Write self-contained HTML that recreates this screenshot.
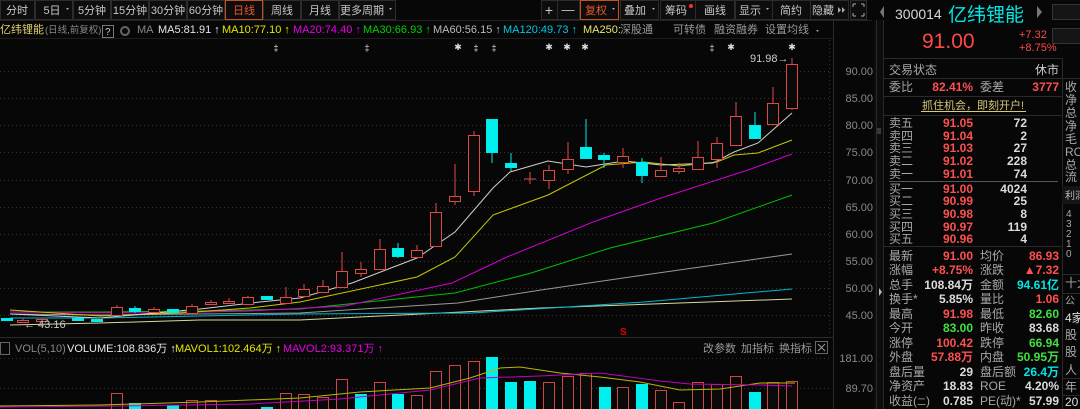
<!DOCTYPE html>
<html><head><meta charset="utf-8"><style>
html,body{margin:0;padding:0;background:#070707;width:1080px;height:409px;overflow:hidden}
svg{display:block}
text{font-family:"Liberation Sans","Noto Sans CJK SC",sans-serif}
</style></head><body>
<svg width="1080" height="409" viewBox="0 0 1080 409" xmlns="http://www.w3.org/2000/svg" style="overflow:hidden">
<rect width="1080" height="409" fill="#070707"/>
<g fill="#0d0d0d" stroke="#2c2c2c">
<rect x="0.5" y="0.5" width="34" height="19"/><rect x="35.5" y="0.5" width="37" height="19"/><rect x="73.5" y="0.5" width="37" height="19"/><rect x="111.5" y="0.5" width="37" height="19"/><rect x="149.5" y="0.5" width="37" height="19"/><rect x="187.5" y="0.5" width="37" height="19"/><rect x="263.5" y="0.5" width="37" height="19"/><rect x="301.5" y="0.5" width="37" height="19"/><rect x="339.5" y="0.5" width="56" height="19"/>
<rect x="541.5" y="0.5" width="16" height="19"/><rect x="557.5" y="0.5" width="22" height="19"/><rect x="620.5" y="0.5" width="38" height="19"/><rect x="660.5" y="0.5" width="35" height="19"/><rect x="695.5" y="0.5" width="39" height="19"/><rect x="735.5" y="0.5" width="37" height="19"/><rect x="772.5" y="0.5" width="38" height="19"/><rect x="810.5" y="0.5" width="38" height="19"/><rect x="850.5" y="0.5" width="16" height="19"/>
</g>
<rect x="225.5" y="0.5" width="37" height="19" fill="#0d0d0d" stroke="#c8501e"/>
<rect x="580.5" y="0.5" width="38" height="19" fill="#0d0d0d" stroke="#c8501e"/>
<g font-size="11" fill="#c8c8c8" text-anchor="middle">
<text x="17" y="14">分时</text><text x="52" y="14">5日</text><text x="92" y="14">5分钟</text><text x="130" y="14">15分钟</text><text x="168" y="14">30分钟</text><text x="206" y="14">60分钟</text>
<text x="244" y="14" fill="#e8582a">日线</text><text x="282" y="14">周线</text><text x="320" y="14">月线</text><text x="362" y="14">更多周期</text>
<text x="549" y="15" font-size="14">+</text><text x="568" y="14" font-size="13">—</text>
<text x="596" y="14" fill="#e8582a">复权</text><text x="635" y="14">叠加</text><text x="676" y="14">筹码</text><text x="715" y="14">画线</text><text x="750" y="14">显示</text><text x="791" y="14">简约</text><text x="823" y="14">隐藏</text>
</g>
<g fill="#aaa"><path d="M66 8l3 0-1.5 2z"/><path d="M389 8l3 0-1.5 2z"/><path d="M612 8l3 0-1.5 2z"/><path d="M652 8l3 0-1.5 2z"/><path d="M766 8l3 0-1.5 2z"/><path d="M838 7l3 3-3 3z"/><path d="M842 7l3 3-3 3z"/></g>
<circle cx="691" cy="6" r="2" fill="#ff3030"/>
<g stroke="#aaa" fill="none" stroke-width="1"><path d="M853 4h3M853 4v3M864 4h-3M864 4v3M853 16h3M853 16v-3M864 16h-3M864 16v-3"/></g>
<line x1="0" y1="20.5" x2="872" y2="20.5" stroke="#222"/>
<g font-size="11">
<text x="0" y="33" fill="#e0d070">亿纬锂能</text><text x="45" y="33" fill="#888" font-size="9.5">(日线,前复权)</text>
<rect x="102.5" y="25.5" width="11" height="12" fill="none" stroke="#777"/><text x="105" y="35" fill="#ccc" font-size="10">?</text>
<circle cx="125" cy="31" r="4" fill="none" stroke="#666" stroke-width="2"/>
<text x="137" y="33" fill="#888">MA</text>
<text x="158" y="33" fill="#e6e6e6">MA5:81.91 ↑</text>
<text x="222" y="33" fill="#e6e600">MA10:77.10 ↑</text>
<text x="293" y="33" fill="#e600e6">MA20:74.40 ↑</text>
<text x="363" y="33" fill="#00d000">MA30:66.93 ↑</text>
<text x="433" y="33" fill="#bbb">MA60:56.15 ↑</text>
<text x="503" y="33" fill="#00c8e6">MA120:49.73 ↑</text>
<text x="583" y="33" fill="#e6e66e">MA250:</text><text x="620" y="33" fill="#999">深股通</text>
<text x="673" y="33" fill="#999">可转债</text><text x="714" y="33" fill="#999">融资融券</text><text x="765" y="33" fill="#999">设置均线</text>
</g>
<path d="M816 30l3 0-1.5 2z" fill="#999"/>
<line x1="0" y1="38.5" x2="833" y2="38.5" stroke="#1c1c1c"/>
<g font-size="9" fill="#ddd" text-anchor="middle">
<text x="276" y="51">‡</text><text x="367" y="51">‡</text><text x="458" y="50">✱</text><text x="476" y="51">‡</text><text x="494" y="51">‡</text><text x="549" y="50">✱</text><text x="567" y="50">✱</text><text x="585" y="50">✱</text><text x="712" y="51">‡</text><text x="731" y="50">✱</text><text x="792" y="50">✱</text>
</g>
<g stroke="#333" stroke-dasharray="1 3">
<line x1="0" y1="71.5" x2="832" y2="71.5"/><line x1="0" y1="98.5" x2="832" y2="98.5"/><line x1="0" y1="125.5" x2="832" y2="125.5"/><line x1="0" y1="152.5" x2="832" y2="152.5"/><line x1="0" y1="180.5" x2="832" y2="180.5"/><line x1="0" y1="207.5" x2="832" y2="207.5"/><line x1="0" y1="234.5" x2="832" y2="234.5"/><line x1="0" y1="261.5" x2="832" y2="261.5"/><line x1="0" y1="288.5" x2="832" y2="288.5"/><line x1="0" y1="315.5" x2="832" y2="315.5"/>
<line x1="0" y1="358.5" x2="832" y2="358.5"/><line x1="0" y1="388.5" x2="832" y2="388.5"/>
<line x1="829.5" y1="40" x2="829.5" y2="336"/>
</g>
<g font-size="11" fill="#8a8a8a" text-anchor="end">
<text x="873" y="75">90.00</text><text x="873" y="102">85.00</text><text x="873" y="129">80.00</text><text x="873" y="156">75.00</text><text x="873" y="184">70.00</text><text x="873" y="211">65.00</text><text x="873" y="238">60.00</text><text x="873" y="265">55.00</text><text x="873" y="292">50.00</text><text x="873" y="319">45.00</text>
<text x="873" y="362">181.00</text><text x="873" y="392">89.70</text>
</g>
<line x1="833.5" y1="20" x2="833.5" y2="409" stroke="#2a2a2a"/>
<g fill="none" stroke-width="1">
<polyline stroke="#d8d8a0" points="10,325 100,323 200,320 300,320 541,308 792,299"/>
<polyline stroke="#00b8d0" points="10,318 100,318 200,316 300,314 472,313 644,302 792,289"/>
<polyline stroke="#9a9a9a" points="10,314 100,315 200,314 300,313 458,303 541,290 644,275 792,254"/>
<polyline stroke="#00c000" points="10,312 100,312 200,311 300,309 455,293 531,273 610,248 713,223 792,195"/>
<polyline stroke="#d000d0" points="10,312 150,313 250,311 345,306 452,283 507,257 593,222 661,198 748,170 792,154"/>
<polyline stroke="#c8c800" points="10,310 100,316 180,313 250,308 300,302 417,277 455,257 493,215 548,195 606,165 644,162 679,166 717,162 734,155 758,153 792,140"/>
<polyline stroke="#cfcfcf" points="10,314 100,318 200,309 260,302 300,298 352,283 417,258 455,232 493,188 510,172 548,161 586,167 624,161 661,165 713,163 734,152 758,143 792,113"/>
</g>
<g stroke="#e04848" fill="#0a0a0a" stroke-width="1">
<line x1="23" y1="318" x2="23" y2="323"/><rect x="17.5" y="320.5" width="11" height="2"/>
<line x1="42" y1="318" x2="42" y2="322"/><rect x="36.5" y="319.5" width="11" height="2"/>
<line x1="117" y1="305" x2="117" y2="316"/><rect x="111.5" y="307.5" width="11" height="8"/>
<line x1="154" y1="307" x2="154" y2="312"/><rect x="148.5" y="309.5" width="11" height="3"/>
<line x1="192" y1="304" x2="192" y2="313"/><rect x="186.5" y="306.5" width="11" height="7"/>
<line x1="211" y1="300" x2="211" y2="304"/><rect x="205.5" y="302.5" width="11" height="2"/>
<line x1="229" y1="298" x2="229" y2="303"/><rect x="223.5" y="301.5" width="11" height="2"/>
<line x1="248" y1="296" x2="248" y2="304"/><rect x="242.5" y="297.5" width="11" height="7"/>
<line x1="286" y1="287" x2="286" y2="303"/><rect x="280.5" y="297.5" width="11" height="6"/>
<line x1="304" y1="284" x2="304" y2="296"/><rect x="298.5" y="289.5" width="11" height="7"/>
<line x1="323" y1="280" x2="323" y2="292"/><rect x="317.5" y="286.5" width="11" height="6"/>
<line x1="342" y1="252" x2="342" y2="287"/><rect x="336.5" y="271.5" width="11" height="16"/>
<line x1="361" y1="262" x2="361" y2="277"/><rect x="355.5" y="269.5" width="11" height="4"/>
<line x1="380" y1="239" x2="380" y2="269"/><rect x="374.5" y="249.5" width="11" height="20"/>
<line x1="417" y1="245" x2="417" y2="257"/><rect x="411.5" y="250.5" width="11" height="7"/>
<line x1="436" y1="203" x2="436" y2="246"/><rect x="430.5" y="212.5" width="11" height="34"/>
<line x1="455" y1="164" x2="455" y2="205"/><rect x="449.5" y="196.5" width="11" height="5"/>
<line x1="474" y1="131" x2="474" y2="196"/><rect x="468.5" y="135.5" width="11" height="56"/>
<line x1="530" y1="172" x2="530" y2="184"/><line x1="524" y1="179" x2="536" y2="179"/>
<line x1="549" y1="165" x2="549" y2="189"/><rect x="543.5" y="170.5" width="11" height="10"/>
<line x1="568" y1="142" x2="568" y2="174"/><rect x="562.5" y="159.5" width="11" height="10"/>
<line x1="623" y1="148" x2="623" y2="168"/><rect x="617.5" y="156.5" width="11" height="6"/>
<line x1="661" y1="157" x2="661" y2="176"/><rect x="655.5" y="170.5" width="11" height="6"/>
<line x1="679" y1="163" x2="679" y2="174"/><rect x="673.5" y="168.5" width="11" height="3"/>
<line x1="698" y1="141" x2="698" y2="169"/><rect x="692.5" y="157.5" width="11" height="12"/>
<line x1="717" y1="137" x2="717" y2="168"/><rect x="711.5" y="143.5" width="11" height="16"/>
<line x1="736" y1="102" x2="736" y2="145"/><rect x="730.5" y="116.5" width="11" height="29"/>
<line x1="773" y1="87" x2="773" y2="124"/><rect x="767.5" y="103.5" width="11" height="21"/>
<line x1="792" y1="58" x2="792" y2="110"/><rect x="786.5" y="64.5" width="11" height="44"/>
</g>
<g stroke="#00e8e8" fill="#00f0f0">
<rect x="1.5" y="318.5" width="11" height="2"/><rect x="72.5" y="318.5" width="11" height="2"/><rect x="91.5" y="319.5" width="11" height="2"/>
<line x1="135" y1="306" x2="135" y2="313"/><rect x="129.5" y="308.5" width="11" height="3"/>
<rect x="167.5" y="309.5" width="11" height="3"/>
<rect x="261.5" y="296.5" width="11" height="3"/>
<line x1="398" y1="243" x2="398" y2="258"/><rect x="392.5" y="248.5" width="11" height="8"/>
<line x1="492" y1="119" x2="492" y2="163"/><rect x="486.5" y="119.5" width="11" height="33"/>
<line x1="511" y1="153" x2="511" y2="171"/><rect x="505.5" y="163.5" width="11" height="4"/>
<line x1="586" y1="119" x2="586" y2="159"/><rect x="580.5" y="147.5" width="11" height="11"/>
<line x1="604" y1="153" x2="604" y2="168"/><rect x="598.5" y="155.5" width="11" height="4"/>
<line x1="642" y1="158" x2="642" y2="183"/><rect x="636.5" y="162.5" width="11" height="13"/>
<line x1="755" y1="112" x2="755" y2="138"/><rect x="749.5" y="125.5" width="11" height="13"/>
</g>
<text x="750" y="62" font-size="11" fill="#ccc">91.98→</text>
<text x="24" y="328" font-size="11" fill="#ccc">← 43.16</text>
<text x="620" y="335" font-size="10" fill="#e00000" font-weight="bold">S</text>
<line x1="0" y1="337.5" x2="833" y2="337.5" stroke="#2a2a2a"/>
<g font-size="11">
<rect x="0.5" y="342.5" width="9" height="12" fill="none" stroke="#666"/>
<text x="15" y="352" fill="#888">VOL(5,10)</text>
<text x="67" y="352" fill="#e6e6e6">VOLUME:108.836万 ↑</text>
<text x="175" y="352" fill="#e6e600">MAVOL1:102.464万 ↑</text>
<text x="283" y="352" fill="#e600e6">MAVOL2:93.371万 ↑</text>
<text x="703" y="352" fill="#999">改参数</text><text x="741" y="352" fill="#999">加指标</text><text x="779" y="352" fill="#999">换指标</text>
</g>
<rect x="815.5" y="341.5" width="12" height="12" fill="none" stroke="#666"/>
<path d="M818 344l7 7M825 344l-7 7" stroke="#999"/>
<g stroke="#d04444" fill="#0a0a0a">
<rect x="111.5" y="393.5" width="11" height="16"/><rect x="186.5" y="400.5" width="11" height="9"/><rect x="205.5" y="400.5" width="11" height="9"/><rect x="280.5" y="393.5" width="11" height="16"/><rect x="298.5" y="394.5" width="11" height="15"/><rect x="317.5" y="397.5" width="11" height="12"/><rect x="336.5" y="379.5" width="11" height="30"/><rect x="374.5" y="382.5" width="11" height="27"/><rect x="411.5" y="395.5" width="11" height="14"/>
<rect x="430.5" y="371.5" width="11" height="38"/><rect x="449.5" y="365.5" width="11" height="44"/><rect x="468.5" y="361.5" width="11" height="48"/><rect x="543.5" y="382.5" width="11" height="27"/><rect x="562.5" y="376.5" width="11" height="33"/><rect x="580.5" y="373.5" width="11" height="36"/><rect x="617.5" y="387.5" width="11" height="22"/><rect x="655.5" y="390.5" width="11" height="19"/><rect x="673.5" y="402.5" width="11" height="7"/><rect x="692.5" y="382.5" width="11" height="27"/><rect x="711.5" y="384.5" width="11" height="25"/><rect x="730.5" y="376.5" width="11" height="33"/><rect x="767.5" y="382.5" width="11" height="27"/><rect x="786.5" y="381.5" width="11" height="28"/>
</g>
<g fill="#00f0f0">
<rect x="129" y="403" width="12" height="6"/><rect x="167" y="405" width="12" height="4"/><rect x="261" y="407" width="12" height="2"/><rect x="355" y="394" width="12" height="15"/><rect x="392" y="394" width="12" height="15"/>
<rect x="486" y="357" width="12" height="52"/><rect x="505" y="382" width="12" height="27"/><rect x="524" y="381" width="12" height="28"/><rect x="599" y="387" width="12" height="22"/><rect x="636" y="384" width="12" height="25"/><rect x="749" y="392" width="12" height="17"/>
</g>
<polyline fill="none" stroke="#b8b800" points="0,406 100,405 200,402 300,398 360,392 430,388 470,378 500,368 520,367 560,373 600,377 640,382 680,390 720,389 760,383 795,383"/>
<polyline fill="none" stroke="#c000c0" points="0,407 120,406 250,404 340,399 430,390 480,378 540,376 600,373 660,381 690,384 760,385 792,386"/>
<rect x="874" y="20" width="10" height="389" fill="#0d0d0d"/>
<line x1="876.5" y1="20" x2="876.5" y2="409" stroke="#2a2a2a"/><line x1="883.5" y1="20" x2="883.5" y2="409" stroke="#2a2a2a"/>
<path d="M878 128v6M880 128v6" stroke="#666"/><path d="M879 288l3 4-3 4z" fill="#bbb"/>
<path d="M880 12l4-6v12z" fill="#777"/>
<text x="895" y="19" font-size="14" fill="#d8d8d8">300014</text>
<text x="948" y="21" font-size="19" fill="#00e6e6">亿纬锂能</text>
<path d="M1037 6l5 6-5 6z" fill="#777"/>
<rect x="1052.5" y="4.5" width="30" height="15" fill="#151515" stroke="#333"/>
<rect x="1052.5" y="28.5" width="30" height="15" fill="#151515" stroke="#333"/>
<text x="922" y="48" font-size="21" fill="#ff4848">91.00</text>
<text x="1019" y="38" font-size="11" fill="#ff4848">+7.32</text>
<text x="1019" y="51" font-size="11" fill="#ff4848">+8.75%</text>
<line x1="884" y1="58.5" x2="1062" y2="58.5" stroke="#2a2a2a"/>
<line x1="1062.5" y1="58" x2="1062.5" y2="409" stroke="#2a2a2a"/>
<g font-size="12" fill="#a8a8a8">
<text x="889" y="74">交易状态</text><text x="1059" y="74" text-anchor="end" fill="#ccc">休市</text>
<text x="889" y="91">委比</text><text x="980" y="91">委差</text>
<text x="889" y="127">卖五</text><text x="889" y="140">卖四</text><text x="889" y="152">卖三</text><text x="889" y="165">卖二</text><text x="889" y="178">卖一</text>
<text x="889" y="193">买一</text><text x="889" y="205">买二</text><text x="889" y="218">买三</text><text x="889" y="231">买四</text><text x="889" y="243">买五</text>
<text x="889" y="260">最新</text><text x="889" y="274">涨幅</text><text x="889" y="289">总手</text><text x="889" y="303">换手*</text><text x="889" y="318">最高</text><text x="889" y="332">今开</text><text x="889" y="347">涨停</text><text x="889" y="361">外盘</text><text x="889" y="376">盘后量</text><text x="889" y="390">净资产</text><text x="889" y="405">收益(<tspan font-size="9">二</tspan>)</text>
<text x="980" y="260">均价</text><text x="980" y="274">涨跌</text><text x="980" y="289">金额</text><text x="980" y="303">量比</text><text x="980" y="318">最低</text><text x="980" y="332">昨收</text><text x="980" y="347">跌停</text><text x="980" y="361">内盘</text><text x="980" y="376">盘后额</text><text x="980" y="390">ROE</text><text x="980" y="405">PE(动)*</text>
</g>
<g stroke="#2a2a2a"><line x1="884" y1="78.5" x2="1062" y2="78.5"/><line x1="884" y1="96.5" x2="1062" y2="96.5"/><line x1="884" y1="115.5" x2="1062" y2="115.5"/><line x1="884" y1="246.5" x2="1062" y2="246.5"/></g>
<line x1="889" y1="181.5" x2="1058" y2="181.5" stroke="#555"/>
<text x="973" y="109" font-size="11" fill="#d8c878" text-anchor="middle">抓住机会，即刻开户!</text>
<line x1="921" y1="111.5" x2="1026" y2="111.5" stroke="#d8c878"/>
<g font-size="12" font-weight="bold" text-anchor="end">
<text x="973" y="91" fill="#ff5050">82.41%</text><text x="1059" y="91" fill="#ff5050">3777</text>
<g fill="#ff5050"><text x="973" y="127">91.05</text><text x="973" y="140">91.04</text><text x="973" y="152">91.03</text><text x="973" y="165">91.02</text><text x="973" y="178">91.01</text><text x="973" y="193">91.00</text><text x="973" y="205">90.99</text><text x="973" y="218">90.98</text><text x="973" y="231">90.97</text><text x="973" y="243">90.96</text></g>
<g fill="#dcdcdc"><text x="1027" y="127">72</text><text x="1027" y="140">2</text><text x="1027" y="152">27</text><text x="1027" y="165">228</text><text x="1027" y="178">74</text><text x="1027" y="193">4024</text><text x="1027" y="205">25</text><text x="1027" y="218">8</text><text x="1027" y="231">119</text><text x="1027" y="243">4</text></g>
<text x="973" y="260" fill="#ff5050">91.00</text><text x="1059" y="260" fill="#ff5050">86.93</text>
<text x="973" y="274" fill="#ff5050">+8.75%</text><text x="1059" y="274" fill="#ff5050">▲7.32</text>
<text x="973" y="289" fill="#dcdcdc">108.84万</text><text x="1059" y="289" fill="#00e6e6">94.61亿</text>
<text x="973" y="303" fill="#dcdcdc">5.85%</text><text x="1059" y="303" fill="#ff5050">1.06</text>
<text x="973" y="318" fill="#ff5050">91.98</text><text x="1059" y="318" fill="#40e040">82.60</text>
<text x="973" y="332" fill="#40e040">83.00</text><text x="1059" y="332" fill="#dcdcdc">83.68</text>
<text x="973" y="347" fill="#ff5050">100.42</text><text x="1059" y="347" fill="#40e040">66.94</text>
<text x="973" y="361" fill="#ff5050">57.88万</text><text x="1059" y="361" fill="#40e040">50.95万</text>
<text x="973" y="376" fill="#dcdcdc">29</text><text x="1059" y="376" fill="#00e6e6">26.4万</text>
<text x="973" y="390" fill="#dcdcdc">18.83</text><text x="1059" y="390" fill="#dcdcdc">4.20%</text>
<text x="973" y="405" fill="#dcdcdc">0.785</text><text x="1059" y="405" fill="#dcdcdc">57.99</text>
</g>
<g font-size="12" fill="#a8a8a8">
<text x="1065" y="91">收</text><text x="1065" y="104">净</text><text x="1065" y="117">总</text><text x="1065" y="130">净</text><text x="1065" y="143">毛</text><text x="1065" y="156">RO</text><text x="1065" y="169">总</text><text x="1065" y="181">流</text>
<text x="1066" y="217" font-size="10">4</text><text x="1066" y="227" font-size="10">3</text><text x="1066" y="237" font-size="10">2</text><text x="1066" y="247" font-size="10">1</text><text x="1066" y="257" font-size="10">0</text>
<text x="1065" y="287">十大</text><text x="1065" y="304" font-size="10">公</text><text x="1065" y="322" fill="#ddd">4家</text><text x="1065" y="339">股</text><text x="1065" y="356">股</text><text x="1065" y="374">人</text><text x="1065" y="391">年</text><text x="1065" y="406" fill="#ddd">20</text>
</g>
<g stroke="#2a2a2a"><line x1="1062" y1="78.5" x2="1080" y2="78.5"/><line x1="1062" y1="186.5" x2="1080" y2="186.5"/><line x1="1062" y1="274.5" x2="1080" y2="274.5"/><line x1="1062" y1="293.5" x2="1080" y2="293.5"/><line x1="1062" y1="378.5" x2="1080" y2="378.5"/><line x1="1062" y1="395.5" x2="1080" y2="395.5"/></g>
<rect x="1062" y="186" width="18" height="18" fill="#151515"/><text x="1065" y="199" font-size="10" fill="#bbb">利润</text>
</svg>
</body></html>
